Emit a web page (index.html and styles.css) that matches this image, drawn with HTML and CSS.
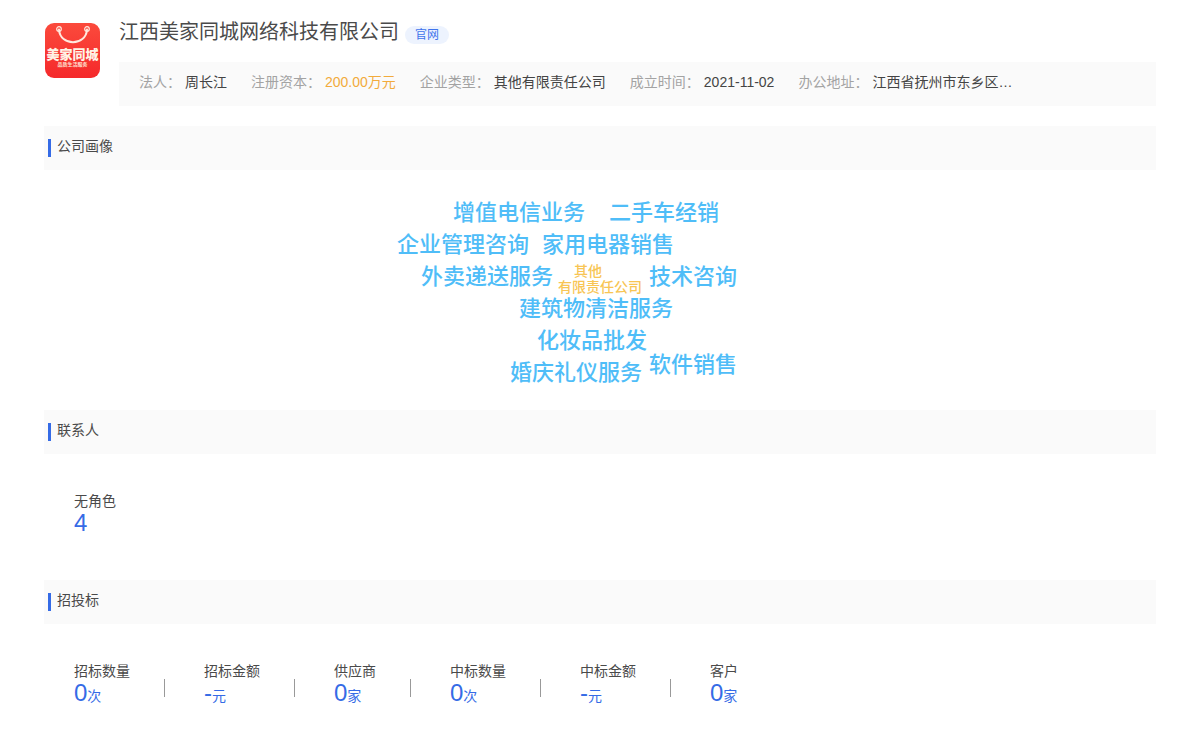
FILE: index.html
```html
<!DOCTYPE html>
<html lang="zh-CN">
<head>
<meta charset="utf-8">
<title>江西美家同城网络科技有限公司</title>
<link rel="stylesheet" href="styles.css">
</head>
<body>
<main class="page">
  <header class="company">
    <svg class="logo" viewBox="0 0 56 56" role="img" aria-label="美家同城">
      <defs>
        <linearGradient id="logo-red" x1="0" y1="0" x2="0" y2="1">
          <stop offset="0" stop-color="#fb4a3c"/>
          <stop offset="1" stop-color="#f5292b"/>
        </linearGradient>
      </defs>
      <rect x="1" y="1" width="55" height="55" rx="9" fill="url(#logo-red)"/>
      <g fill="none" stroke="#ffe9df">
        <circle cx="15" cy="7" r="2.3" stroke-width="1.2"/>
        <circle cx="43" cy="7" r="2.3" stroke-width="1.2"/>
        <path d="M15 7.500C16 24.500 42 24.500 43 7.500" stroke-width="2" stroke-linecap="round"/>
      </g>
      <text class="logo-name" x="28.500" y="37" text-anchor="middle">美家同城</text>
      <text class="logo-tag" x="28.500" y="44" text-anchor="middle">品质生活服务</text>
    </svg>
    <div class="company-main">
      <div class="title-row">
        <h1 class="title">江西美家同城网络科技有限公司</h1>
        <a class="site-link" href="#">官网</a>
      </div>
      <dl class="facts">
        <div class="fact"><dt>法人：</dt><dd>周长江</dd></div>
        <div class="fact"><dt>注册资本：</dt><dd class="money">200.00万元</dd></div>
        <div class="fact"><dt>企业类型：</dt><dd>其他有限责任公司</dd></div>
        <div class="fact"><dt>成立时间：</dt><dd>2021-11-02</dd></div>
        <div class="fact"><dt>办公地址：</dt><dd>江西省抚州市东乡区…</dd></div>
      </dl>
    </div>
  </header>

  <section class="section">
    <h2 class="section-title">公司画像</h2>
    <div class="cloud">
      <span class="word w1">增值电信业务</span>
      <span class="word w2">二手车经销</span>
      <span class="word w3">企业管理咨询</span>
      <span class="word w4">家用电器销售</span>
      <span class="word w5">外卖递送服务</span>
      <span class="word core">其他<br>有限责任公司</span>
      <span class="word w6">技术咨询</span>
      <span class="word w7">建筑物清洁服务</span>
      <span class="word w8">化妆品批发</span>
      <span class="word w9">软件销售</span>
      <span class="word w10">婚庆礼仪服务</span>
    </div>
  </section>

  <section class="section">
    <h2 class="section-title">联系人</h2>
    <dl class="stats">
      <div class="stat"><dt>无角色</dt><dd>4</dd></div>
    </dl>
  </section>

  <section class="section">
    <h2 class="section-title">招投标</h2>
    <dl class="stats">
      <div class="stat"><dt>招标数量</dt><dd>0<small>次</small></dd></div>
      <div class="stat"><dt>招标金额</dt><dd>-<small>元</small></dd></div>
      <div class="stat"><dt>供应商</dt><dd>0<small>家</small></dd></div>
      <div class="stat"><dt>中标数量</dt><dd>0<small>次</small></dd></div>
      <div class="stat"><dt>中标金额</dt><dd>-<small>元</small></dd></div>
      <div class="stat"><dt>客户</dt><dd>0<small>家</small></dd></div>
    </dl>
  </section>
</main>
</body>
</html>
```
FILE: styles.css
```css
* { box-sizing: border-box; }

body {
  margin: 0;
  background: #fff;
  color: #4a4a4a;
  font-family: "Liberation Sans", "Noto Sans CJK SC", sans-serif;
  font-size: 14px;
  line-height: 20px;
}

h1, h2, dl, dd { margin: 0; font-weight: 400; }

.page { padding: 16px 44px 32px; }

.company { display: flex; gap: 19px; margin-bottom: 20px; }
.logo { flex: none; width: 56px; height: 56px; margin-top: 6px; }
.logo-name { font-size: 13px; font-weight: 900; fill: #fff3e6; }
.logo-tag { font-size: 5px; font-weight: 700; fill: #ffe3d6; }
.company-main { flex: 1; min-width: 0; }

.title-row { display: flex; align-items: flex-start; gap: 6px; height: 46px; }
.title { font-size: 20px; line-height: 32px; }
.site-link {
  margin-top: 10px;
  padding: 0 10px;
  border-radius: 9px;
  background: #edf3fe;
  color: #3f74ec;
  font-size: 12px;
  line-height: 18px;
  text-decoration: none;
}

.facts {
  display: flex;
  gap: 24px;
  padding: 10px 20px 14px;
  background: #fafafa;
  white-space: nowrap;
}
.fact { display: flex; gap: 4px; }
.fact dt { color: #a3a3a3; }
.fact dd { color: #444; }
.fact .money { color: #f2ab3c; }

.section-title {
  display: flex;
  align-items: center;
  gap: 6px;
  padding: 10px 4px 14px;
  background: #fafafa;
  font-size: 14px;
  line-height: 20px;
}
.section-title::before {
  content: "";
  width: 3px;
  height: 18px;
  margin: 3px 0 -1px;
  background: #356be6;
}

.cloud { position: relative; width: 400px; height: 240px; margin: 0 auto; }
.word {
  position: absolute;
  color: #4fbdf8;
  font-size: 22px;
  font-weight: 500;
  line-height: 32px;
  white-space: nowrap;
}
.w1 { left: 53px; top: 27px; }
.w2 { left: 209px; top: 27px; }
.w3 { left: -3px; top: 59px; }
.w4 { left: 142px; top: 59px; }
.w5 { left: 21px; top: 91px; }
.w6 { left: 249px; top: 91px; }
.w7 { left: 119px; top: 123px; }
.w8 { left: 137px; top: 155px; }
.w9 { left: 249px; top: 179px; }
.w10 { left: 110px; top: 187px; }
.core {
  left: 158px;
  top: 93px;
  color: #f8c554;
  font-size: 14px;
  line-height: 16px;
  text-indent: 16px;
}

.stats { display: flex; gap: 74px; height: 126px; padding: 37px 30px 0; }
.stat { position: relative; }
.stat:not(:last-child)::after {
  content: "";
  position: absolute;
  right: -35px;
  top: 18px;
  width: 1px;
  height: 18px;
  background: #999;
}
.stat dd { color: #356be6; font-size: 24px; line-height: 24px; }
.stat small { font-size: 14px; }
```
